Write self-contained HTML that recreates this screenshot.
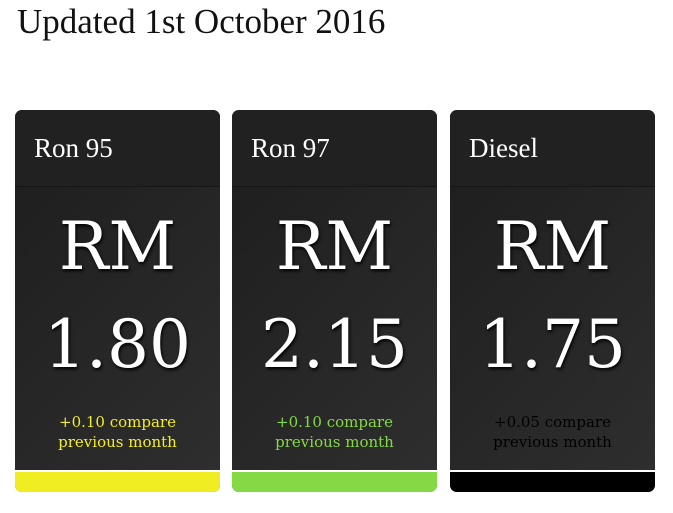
<!DOCTYPE html>
<html><head><meta charset="utf-8"><style>
body{margin:0;background:#fff;width:673px;height:513px;overflow:hidden;font-family:"DejaVu Serif","Liberation Serif",serif;}
h1{position:absolute;left:17px;top:2px;margin:0;font-family:"Liberation Serif",serif;font-weight:normal;font-size:35px;color:#111;}
.card{position:absolute;top:110px;width:205px;height:382px;border-radius:7px;overflow:hidden;background:#282828;}
.hd{height:76px;background:#212121;border-bottom:1px solid #161616;color:#fff;font-size:27px;line-height:76px;padding-left:19px;font-family:"Liberation Serif",serif;}
.body{height:283px;background:linear-gradient(135deg,#1f1f1f,#2e2e2e);text-align:center;color:#fff;position:relative;}
.rm{position:absolute;top:20px;left:0;right:0;font-size:66px;line-height:80px;text-shadow:1px 2px 3px #000;}
.pr{position:absolute;top:118px;left:0;right:0;font-size:66px;line-height:80px;text-shadow:1px 2px 3px #000;}
.ch{position:absolute;top:225px;left:0;right:0;font-size:15px;line-height:20px;}
.gap{height:2px;background:#fff;}
.bar{height:20px;}
</style></head><body>
<h1>Updated 1st October 2016</h1>
<div class="card" style="left:15px"><div class="hd">Ron 95</div><div class="body"><div class="rm">RM</div><div class="pr">1.80</div><div class="ch" style="color:#f2ee22">+0.10 compare<br>previous month</div></div><div class="gap"></div><div class="bar" style="background:#f0ee22"></div></div>
<div class="card" style="left:232px"><div class="hd">Ron 97</div><div class="body"><div class="rm">RM</div><div class="pr">2.15</div><div class="ch" style="color:#84d944">+0.10 compare<br>previous month</div></div><div class="gap"></div><div class="bar" style="background:#84d944"></div></div>
<div class="card" style="left:450px"><div class="hd">Diesel</div><div class="body"><div class="rm">RM</div><div class="pr">1.75</div><div class="ch" style="color:#000">+0.05 compare<br>previous month</div></div><div class="gap"></div><div class="bar" style="background:#000"></div></div>
</body></html>
